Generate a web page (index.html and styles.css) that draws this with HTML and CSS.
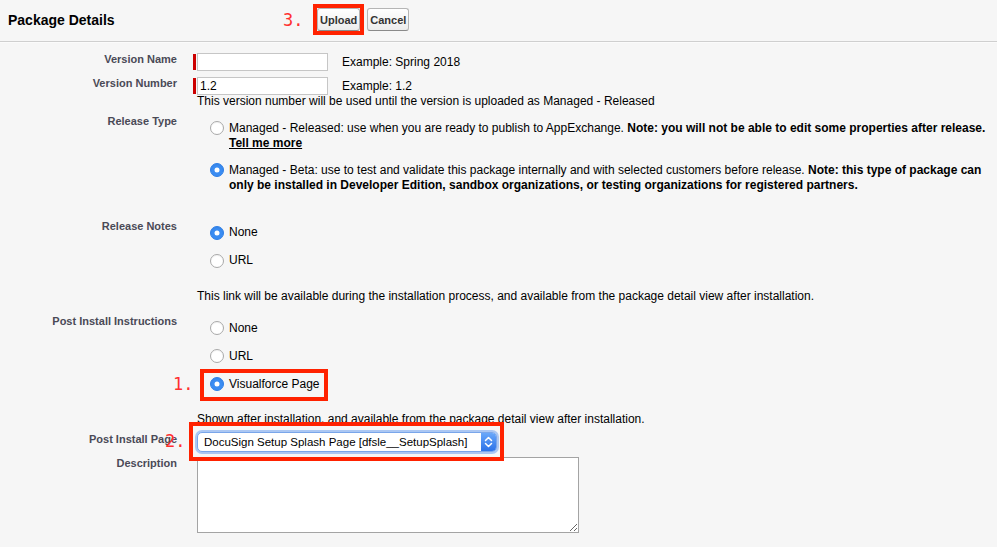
FILE: index.html
```html
<!DOCTYPE html>
<html>
<head>
<meta charset="utf-8">
<title>Package Details</title>
<link rel="stylesheet" href="styles.css">
</head>
<body>
<div class="page">
  <div class="hdr">
    <h2 class="title">Package Details</h2>
    <div class="btns">
      <span class="mark"><button class="btn">Upload</button></span>
      <button class="btn">Cancel</button>
    </div>
  </div>

  <div class="form">
    <div class="row r-name">
      <div class="lbl">Version Name</div>
      <div class="fld">
        <div class="req"><span class="bar"></span><input class="txt" type="text" value=""><span class="ex">Example: Spring 2018</span></div>
      </div>
    </div>

    <div class="row r-num">
      <div class="lbl">Version Number</div>
      <div class="fld">
        <div class="req"><span class="bar"></span><input class="txt" type="text" value="1.2"><span class="ex">Example: 1.2</span></div>
        <div class="help help-tight">This version number will be used until the version is uploaded as Managed - Released</div>
      </div>
    </div>

    <div class="row r-type">
      <div class="lbl">Release Type</div>
      <div class="fld opts">
        <label class="opt opt-wide"><input class="radio" type="radio" name="rt"><span class="otext">Managed - Released: use when you are ready to publish to AppExchange. <b>Note: you will not be able to edit some properties after release.</b><br><b class="link">Tell me more</b></span></label>
        <label class="opt opt-wide"><input class="radio" type="radio" name="rt" checked><span class="otext">Managed - Beta: use to test and validate this package internally and with selected customers before release. <b>Note: this type of package can</b><br><b>only be installed in Developer Edition, sandbox organizations, or testing organizations for registered partners.</b></span></label>
      </div>
    </div>

    <div class="row r-notes">
      <div class="lbl">Release Notes</div>
      <div class="fld opts">
        <label class="opt"><input class="radio" type="radio" name="rn" checked><span class="otext">None</span></label>
        <label class="opt"><input class="radio" type="radio" name="rn"><span class="otext">URL</span></label>
        <div class="help help-gap">This link will be available during the installation process, and available from the package detail view after installation.</div>
      </div>
    </div>

    <div class="row r-post">
      <div class="lbl">Post Install Instructions</div>
      <div class="fld opts">
        <label class="opt"><input class="radio" type="radio" name="pi"><span class="otext">None</span></label>
        <label class="opt"><input class="radio" type="radio" name="pi"><span class="otext">URL</span></label>
        <label class="opt"><input class="radio" type="radio" name="pi" checked><span class="otext">Visualforce Page</span></label>
        <div class="help help-gap2">Shown after installation, and available from the package detail view after installation.</div>
      </div>
    </div>

    <div class="row r-page">
      <div class="lbl">Post Install Page</div>
      <div class="fld">
        <div class="select">
          <span class="sel-text">DocuSign Setup Splash Page [dfsle__SetupSplash]</span>
          <span class="sel-arrow">
            <svg width="15" height="18" viewBox="0 0 15 18"><path d="M4.5 7.5 L7.5 4.5 L10.5 7.5" fill="none" stroke="#fff" stroke-width="1.5" stroke-linecap="round" stroke-linejoin="round"/><path d="M4.5 10.5 L7.5 13.5 L10.5 10.5" fill="none" stroke="#fff" stroke-width="1.5" stroke-linecap="round" stroke-linejoin="round"/></svg>
          </span>
        </div>
      </div>
    </div>

    <div class="row r-desc">
      <div class="lbl">Description</div>
      <div class="fld">
        <textarea class="area"></textarea>
      </div>
    </div>
  </div>

  <span class="anno n3">3.</span>
  <span class="anno n1">1.</span>
  <span class="anno n2">2.</span>
  <div class="box b1"></div>
  <div class="box b2"></div>
</div>
</body>
</html>
```

FILE: styles.css
```css
* { box-sizing: border-box; }
html, body { margin: 0; padding: 0; }
body {
  background: #f6f6f6;
  font-family: "Liberation Sans", Arial, Helvetica, sans-serif;
  font-size: 12px;
  color: #000;
  width: 997px;
  height: 547px;
  overflow: hidden;
}
.page { position: relative; height: 547px; }

/* header */
.hdr {
  display: flex;
  align-items: center;
  height: 42px;
  padding-left: 8px;
  border-bottom: 1px solid #cfcfcf;
  box-shadow: 0 1px 0 #fbfbfb;
}
.title {
  flex: 0 0 305px;
  margin: 0;
  font-size: 14px;
  font-weight: bold;
  color: #000;
  margin-top: -1px;
}
.btns { display: flex; align-items: center; gap: 3px; margin-top: -2px; }
.mark { display: flex; border: 4px solid #ff2200; }
.btn {
  height: 23px;
  padding: 0 2px;
  border: 1px solid #b5b5b5;
  border-bottom-color: #8a8a8a;
  border-radius: 3px;
  background: linear-gradient(#ffffff, #ececec);
  font: bold 11px "Liberation Sans", Arial, sans-serif;
  color: #333;
}

/* form rows */
.form { padding-top: 10px; }
.row { display: flex; align-items: flex-start; }
.lbl {
  flex: 0 0 177px;
  text-align: right;
  font-size: 11px;
  font-weight: bold;
  color: #4a4a56;
  line-height: 14px;
}
.fld { margin-left: 20px; }

.r-num { margin-top: 5px; }
.r-type { margin-top: 6px; }
.r-notes { margin-top: 26px; }
.r-post { margin-top: 10px; }
.r-page { margin-top: 5.5px; }
.r-desc { margin-top: 4px; }

.req { display: flex; align-items: center; margin-left: -4px; margin-top: 1px; }
.bar { width: 3px; height: 16px; background: #c00; margin-right: 1px; }
.txt {
  width: 131px;
  height: 18px;
  margin: 0;
  padding: 0 2px;
  border: 1px solid #c6c6c6;
  background: #fff;
  font: 12px "Liberation Sans", Arial, sans-serif;
  color: #000;
}
.ex { margin-left: 14px; line-height: 15px; }

.help { line-height: 15px; white-space: nowrap; }
.help-tight { line-height: 13px; }
.help-gap { margin-top: 21px; }
.help-gap2 { margin-top: 20px; }

/* radio options */
.opts { padding-top: 6.5px; }
.opt {
  display: flex;
  align-items: flex-start;
  padding-left: 13px;
  line-height: 15px;
  margin-bottom: 13px;
  white-space: nowrap;
}
.opt:last-of-type { margin-bottom: 0; }
.opt-wide { margin-bottom: 12px; }
.radio {
  -webkit-appearance: none;
  appearance: none;
  position: relative;
  flex: none;
  width: 14px;
  height: 14px;
  margin: 0.5px 5px 0 0;
  border-radius: 50%;
  border: 1px solid #a9a9a9;
  background: #fff;
  box-shadow: inset 0 1px 1px rgba(0,0,0,0.05);
}
.radio:checked {
  background: #3a8cf2;
  border-color: #2f7fe6;
}
.radio:checked::after {
  content: "";
  position: absolute;
  left: 50%;
  top: 50%;
  width: 5px;
  height: 5px;
  border-radius: 50%;
  background: #fff;
  transform: translate(-50%, -50%);
}
.otext { color: #000; }
.link { text-decoration: underline; }

/* select */
.select {
  display: flex;
  align-items: center;
  width: 300px;
  height: 20px;
  border: 1px solid #7aa6ea;
  border-radius: 5px;
  background: #fff;
  box-shadow: 0 0 0 2px rgba(110, 160, 240, 0.55);
  overflow: hidden;
}
.sel-text { flex: 1; padding-left: 6px; font-size: 11.5px; line-height: 18px; white-space: nowrap; }
.sel-arrow {
  display: flex;
  align-items: center;
  justify-content: center;
  width: 15px;
  height: 18px;
  background: linear-gradient(#6aa8fa, #2c72e8);
}

/* textarea */
.area {
  display: block;
  width: 382px;
  height: 76px;
  margin: 1px 0 0;
  border: 1px solid #a4a4a4;
  background: #fff;
  font: 12px "Liberation Sans", Arial, sans-serif;
}

/* annotations */
.anno {
  position: absolute;
  font-family: "DejaVu Sans Mono", "Liberation Mono", monospace;
  font-size: 17px;
  line-height: 20px;
  color: #ff3030;
}
.n3 { left: 283px; top: 10px; }
.n1 { left: 173px; top: 374px; }
.n2 { left: 165px; top: 431px; }
.box { position: absolute; border: 4px solid #ff2200; }
.b1 { left: 200px; top: 369px; width: 128px; height: 32px; }
.b2 { left: 189px; top: 422px; width: 315px; height: 39px; }
```
